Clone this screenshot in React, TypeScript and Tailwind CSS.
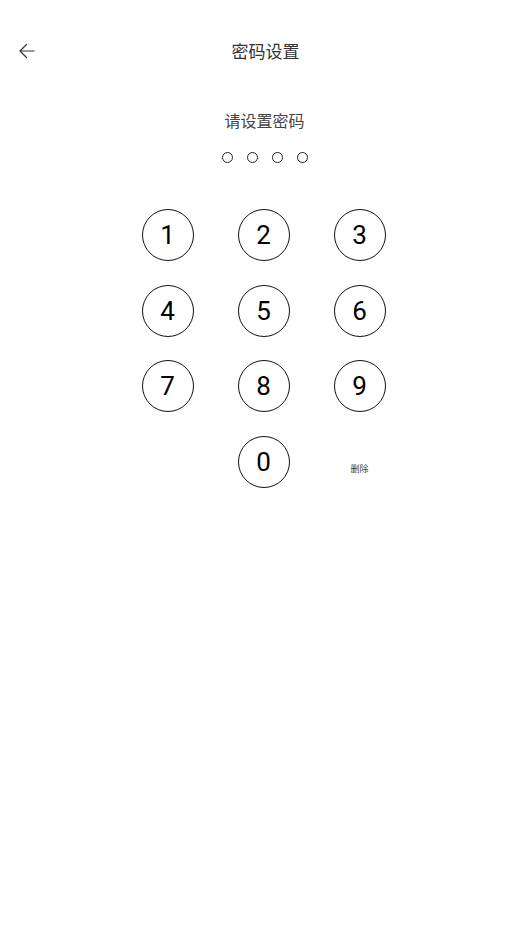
import React from 'react'

const keys = ['1', '2', '3', '4', '5', '6', '7', '8', '9']

function BackArrow() {
    return (
        <svg width="16" height="16" viewBox="0 0 16 16" fill="none" stroke="#333" strokeWidth="1.2" strokeLinecap="round" strokeLinejoin="round">
            <path d="M15 8H1.5" />
            <path d="M7.5 1.5L1 8l6.5 6.5" />
        </svg>
    )
}

function Key({ label }: { label: string }) {
    return (
        <button className="w-[52px] h-[52px] rounded-full border border-[#111] flex items-center justify-center text-[26px] leading-none text-black font-['Roboto',sans-serif]">
            {label}
        </button>
    )
}

export default function App() {
    return (
        <div className="w-[529px] h-[940px] bg-white font-['Noto_Sans_CJK_SC',sans-serif]">
            {/* Header */}
            <div className="h-[102px] grid grid-cols-[1fr_auto_1fr] items-center">
                <div className="pl-[19px] flex items-center">
                    <BackArrow />
                </div>
                <div className="text-[17px] text-[#333] translate-x-[1px]">密码设置</div>
                <div />
            </div>

            {/* Prompt */}
            <div className="flex flex-col items-center">
                <div className="mt-[7px] text-[16px] leading-[22px] text-[#444]">请设置密码</div>
                <div className="mt-[21px] flex gap-[14px]">
                    {[0, 1, 2, 3].map((i) => (
                        <div key={i} className="w-[11px] h-[11px] rounded-full border border-[#222]" />
                    ))}
                </div>

                {/* Keypad */}
                <div className="mt-[46px] mr-[2px] grid grid-cols-[52px_52px_52px] gap-x-[44px] gap-y-[23.6px]">
                    {keys.map((k) => (
                        <Key key={k} label={k} />
                    ))}
                    <div />
                    <Key label="0" />
                    <div className="flex items-center justify-center pt-[14px] text-[9px] text-[#444]">删除</div>
                </div>
            </div>
        </div>
    )
}
